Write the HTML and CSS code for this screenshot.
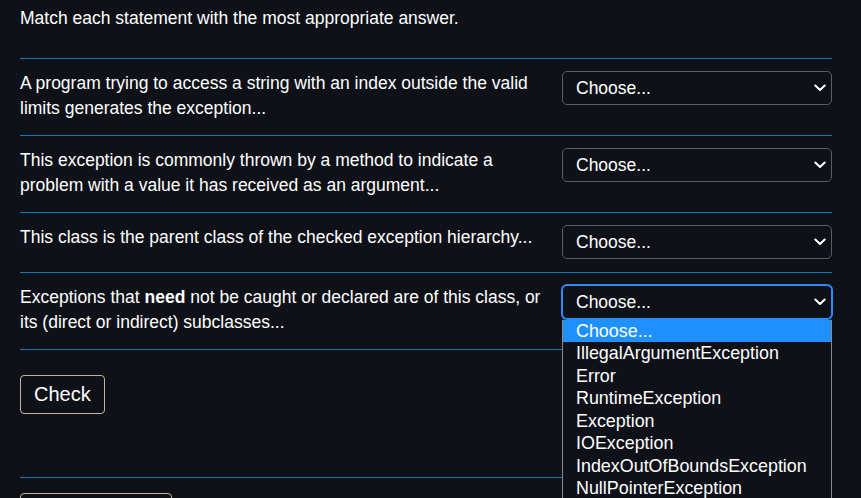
FILE: index.html
```html
<!DOCTYPE html>
<html lang="en">
<head>
    <meta charset="UTF-8">
    <meta name="viewport" content="width=device-width, initial-scale=1.0">
    <title>Match question</title>
    <link rel="stylesheet" href="styles.css">
</head>
<body>

    <div class="question">
        <p class="qtext">Match each statement with the most appropriate answer.</p>

        <div class="answers">
            <div class="row">
                <div class="stem">A program trying to access a string with an index outside the valid limits generates the exception...</div>
                <div class="choice">
                    <select class="select">
                        <option>Choose...</option>
                    </select>
                    <svg class="chevron" width="12" height="8" viewBox="0 0 12 8"><path d="M1.3 1.5 L6 6 L10.7 1.5" fill="none" stroke="#fff" stroke-width="2" stroke-linecap="round" stroke-linejoin="round"/></svg>
                </div>
            </div>

            <div class="row">
                <div class="stem">This exception is commonly thrown by a method to indicate a problem with a value it has received as an argument...</div>
                <div class="choice">
                    <select class="select">
                        <option>Choose...</option>
                    </select>
                    <svg class="chevron" width="12" height="8" viewBox="0 0 12 8"><path d="M1.3 1.5 L6 6 L10.7 1.5" fill="none" stroke="#fff" stroke-width="2" stroke-linecap="round" stroke-linejoin="round"/></svg>
                </div>
            </div>

            <div class="row">
                <div class="stem">This class is the parent class of the checked exception hierarchy...</div>
                <div class="choice">
                    <select class="select">
                        <option>Choose...</option>
                    </select>
                    <svg class="chevron" width="12" height="8" viewBox="0 0 12 8"><path d="M1.3 1.5 L6 6 L10.7 1.5" fill="none" stroke="#fff" stroke-width="2" stroke-linecap="round" stroke-linejoin="round"/></svg>
                </div>
            </div>

            <div class="row">
                <div class="stem">Exceptions that <b>need</b> not be caught or declared are of this class, or its (direct or indirect) subclasses...</div>
                <div class="choice">
                    <select class="select focused">
                        <option>Choose...</option>
                    </select>
                    <svg class="chevron" width="12" height="8" viewBox="0 0 12 8"><path d="M1.3 1.5 L6 6 L10.7 1.5" fill="none" stroke="#fff" stroke-width="2" stroke-linecap="round" stroke-linejoin="round"/></svg>

                    <!-- open list of the focused select -->
                    <ul class="options">
                        <li class="active">Choose...</li>
                        <li>IllegalArgumentException</li>
                        <li>Error</li>
                        <li>RuntimeException</li>
                        <li>Exception</li>
                        <li>IOException</li>
                        <li>IndexOutOfBoundsException</li>
                        <li>NullPointerException</li>
                        <li>ArithmeticException</li>
                    </ul>
                </div>
            </div>
        </div>

        <div class="actions">
            <button class="btn">Check</button>
        </div>
    </div>

    <div class="footer">
        <button class="btn">Finish review</button>
    </div>

</body>
</html>
```

FILE: styles.css
```css
body {
    margin: 0;
    padding: 6px 29px 0 20px;
    background: #0e1117;
    color: #fff;
    font-family: "Liberation Sans", Arial, sans-serif;
    font-size: 17.5px;
    line-height: 25.5px;
    overflow: hidden;
}
.qtext {
    margin: 0 0 26px;
}
.row {
    display: grid;
    grid-template-columns: 1fr 270px;
    column-gap: 12px;
    align-items: start;
    padding: 12px 0 13px;
    border-top: 1px solid #0d7bb0;
}
.row:last-child {
    border-bottom: 1px solid #0d7bb0;
}
.choice {
    position: relative;
}
.select {
    display: block;
    width: 100%;
    height: 34px;
    margin: 0;
    padding: 0 30px 0 13px;
    appearance: none;
    -webkit-appearance: none;
    background: #0e1117;
    color: #fff;
    border: 1px solid #5a5d61;
    border-radius: 5px;
    font-family: inherit;
    font-size: 17.5px;
    outline: none;
}
.select.focused {
    border-color: #2a8cff;
    box-shadow: 0 0 0 1px #2a8cff;
}
.chevron {
    position: absolute;
    right: 6px;
    top: 13px;
    pointer-events: none;
}
.options {
    position: absolute;
    top: 35px;
    left: 0;
    right: 0;
    margin: 0;
    padding: 0;
    list-style: none;
    background: #0e1117;
    border: 1px solid #8a8a8a;
    border-top: none;
    z-index: 2;
}
.options li {
    height: 22.5px;
    line-height: 22.5px;
    padding-left: 13px;
    font-size: 17.9px;
    white-space: nowrap;
}
.options li.active {
    background: #1e90ff;
}
.actions {
    padding: 25px 0 63px;
    border-bottom: 1px solid #0d7bb0;
}
.btn {
    height: 39px;
    padding: 0 13px;
    background: transparent;
    color: #fff;
    border: 1px solid #c4b394;
    border-radius: 4px;
    font-family: inherit;
    font-size: 20px;
    cursor: pointer;
}
.footer {
    padding-top: 15px;
}
.footer .btn {
    width: 152px;
}
```
